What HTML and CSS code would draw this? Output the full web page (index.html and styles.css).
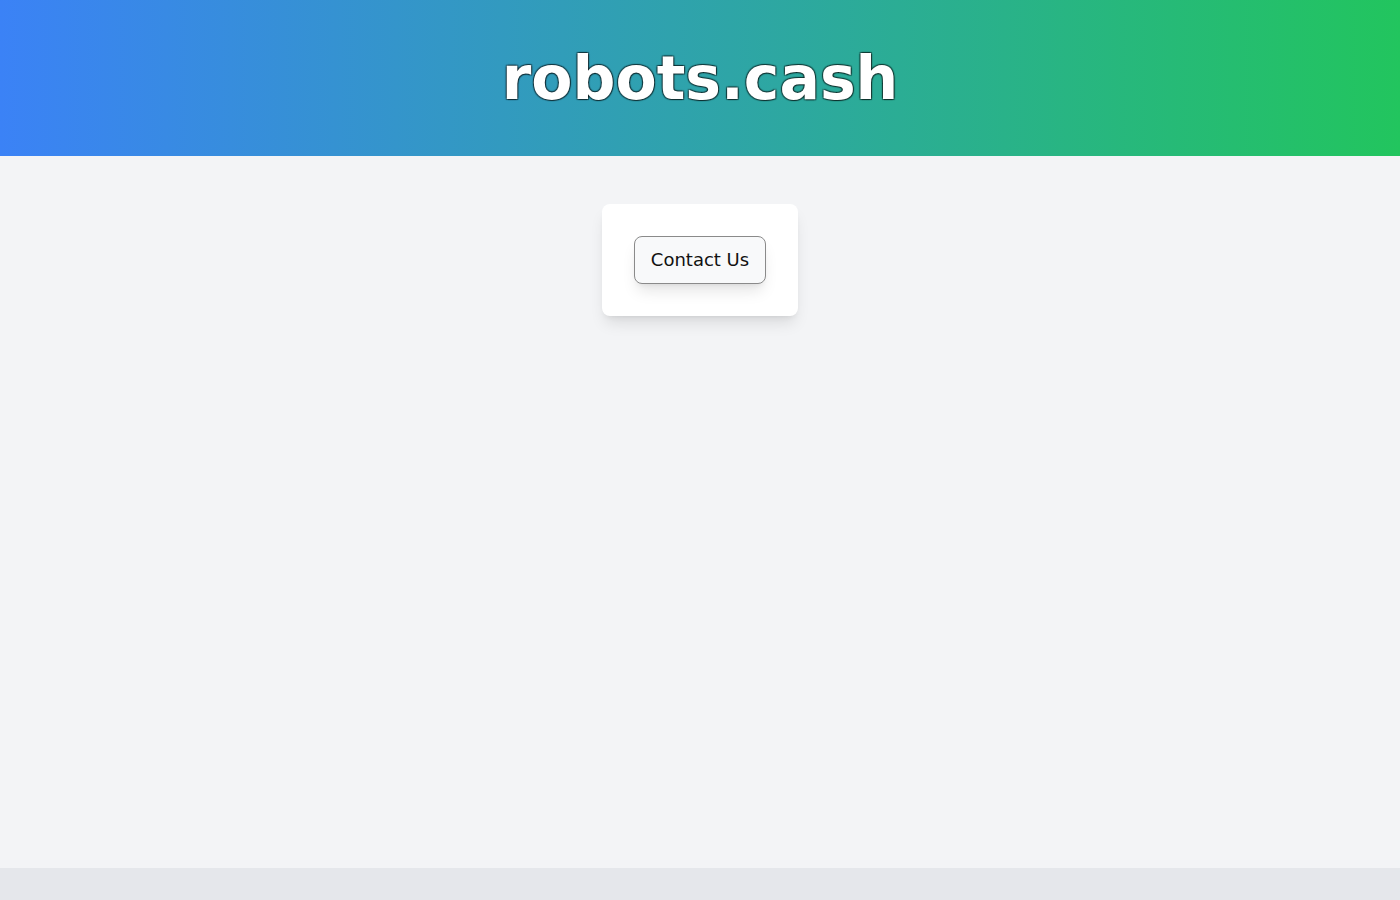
FILE: index.html
```html
<!DOCTYPE html>
<html lang="en">
<head>
<meta charset="utf-8">
<title>robots.cash</title>
<link rel="stylesheet" href="styles.css">
</head>
<body>
<header class="site-header">
  <h1 class="site-title">robots.cash</h1>
</header>
<main class="site-main">
  <div class="card">
    <button class="contact-btn" type="button">Contact Us</button>
  </div>
</main>
<footer class="site-footer"></footer>
</body>
</html>
```

FILE: styles.css
```css
* { box-sizing: border-box; }
html, body { margin: 0; padding: 0; }
body {
  min-height: 100vh;
  display: flex;
  flex-direction: column;
  background: #f3f4f6;
  font-family: "DejaVu Sans", sans-serif;
}
.site-header {
  background: linear-gradient(to right, #3b82f6, #22c55e);
  padding: 48px 0;
  text-align: center;
}
.site-title {
  margin: 0;
  font-size: 60px;
  line-height: 1;
  font-weight: 700;
  color: #ffffff;
  text-shadow: 1px 1px 1px rgba(0,0,0,0.55), -1px -1px 1px rgba(0,0,0,0.45), 1px -1px 1px rgba(0,0,0,0.45), -1px 1px 1px rgba(0,0,0,0.45);
}
.site-main {
  flex: 1;
  display: flex;
  justify-content: center;
  align-items: flex-start;
  padding-top: 48px;
}
.card {
  background: #ffffff;
  border-radius: 8px;
  padding: 32px;
  box-shadow: 0 10px 15px -3px rgba(0,0,0,0.1), 0 4px 6px -4px rgba(0,0,0,0.1);
}
.contact-btn {
  display: block;
  height: 48px;
  padding: 0 16px 2px;
  font-family: "DejaVu Sans", sans-serif;
  font-size: 18px;
  color: #111111;
  background: #f8f9fa;
  border: 1px solid #8a8a8a;
  border-radius: 8px;
  box-shadow: 0 10px 15px -3px rgba(0,0,0,0.1), 0 4px 6px -4px rgba(0,0,0,0.1);
}
.site-footer {
  height: 32px;
  background: #e5e7eb;
}
```
